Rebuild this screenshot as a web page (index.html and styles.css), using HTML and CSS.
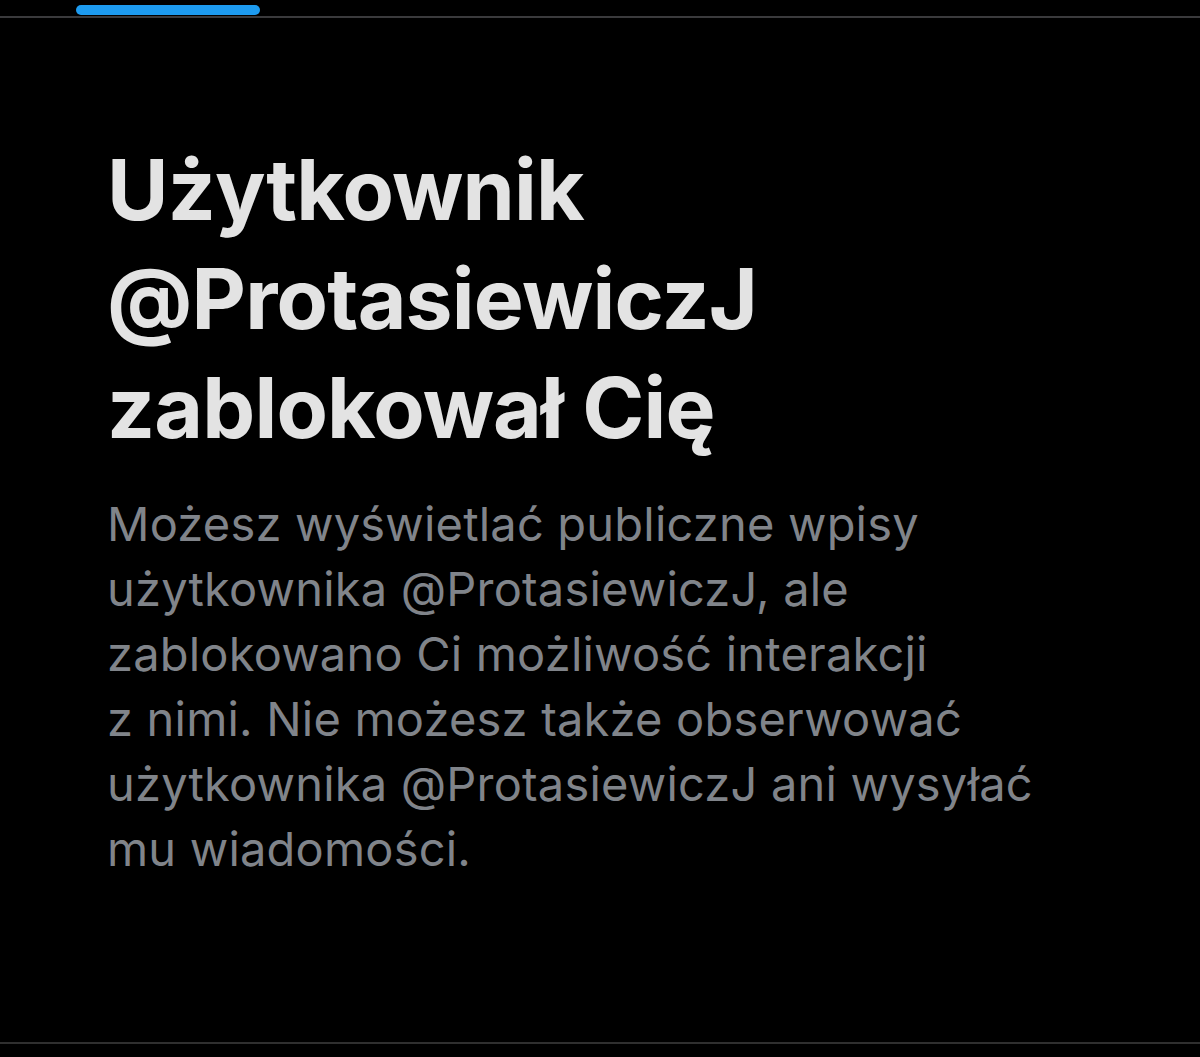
FILE: index.html
```html
<!DOCTYPE html>
<html lang="pl">
<head>
    <meta charset="UTF-8">
    <meta name="viewport" content="width=device-width, initial-scale=1.0">
    <title>Zablokowano</title>
    <link rel="stylesheet" href="styles.css">
</head>
<body>
    <div class="page">
        <div class="tabs">
            <div class="tab active"><span class="indicator"></span></div>
        </div>

        <div class="content">
            <h1 class="title">Użytkownik<br>@ProtasiewiczJ<br>zablokował Cię</h1>
            <p class="message">
                Możesz wyświetlać publiczne wpisy<br>
                użytkownika @ProtasiewiczJ, ale<br>
                zablokowano Ci możliwość interakcji<br>
                z nimi. Nie możesz także obserwować<br>
                użytkownika @ProtasiewiczJ ani wysyłać<br>
                mu wiadomości.
            </p>
        </div>

        <div class="bottom-line"></div>
    </div>
</body>
</html>
```

FILE: styles.css
```css
body {
    margin: 0;
    background: #000;
    font-family: Inter, "Noto Sans", sans-serif;
}

.page {
    height: 100vh;
    display: flex;
    flex-direction: column;
}

.tabs {
    height: 16px;
    border-bottom: 2px solid #3a3a3c;
    display: flex;
}

.tab {
    margin-left: 76px;
    width: 184px;
    padding-top: 5px;
}

.indicator {
    display: block;
    height: 10px;
    border-radius: 5px;
    background: #1d9bf0;
}

.content {
    flex: 1;
    padding-left: 107px;
}

.title {
    margin: 117px 0 0;
    color: #e3e3e3;
    font-size: 84px;
    line-height: 109px;
    font-weight: 700;
    letter-spacing: -0.8px;
}

.message {
    margin: 29px 0 0;
    color: #80848a;
    font-size: 47px;
    line-height: 65px;
    font-weight: 400;
    letter-spacing: 0.2px;
}

.bottom-line {
    height: 2px;
    background: #2f2f2f;
    margin-bottom: 13px;
}
```
